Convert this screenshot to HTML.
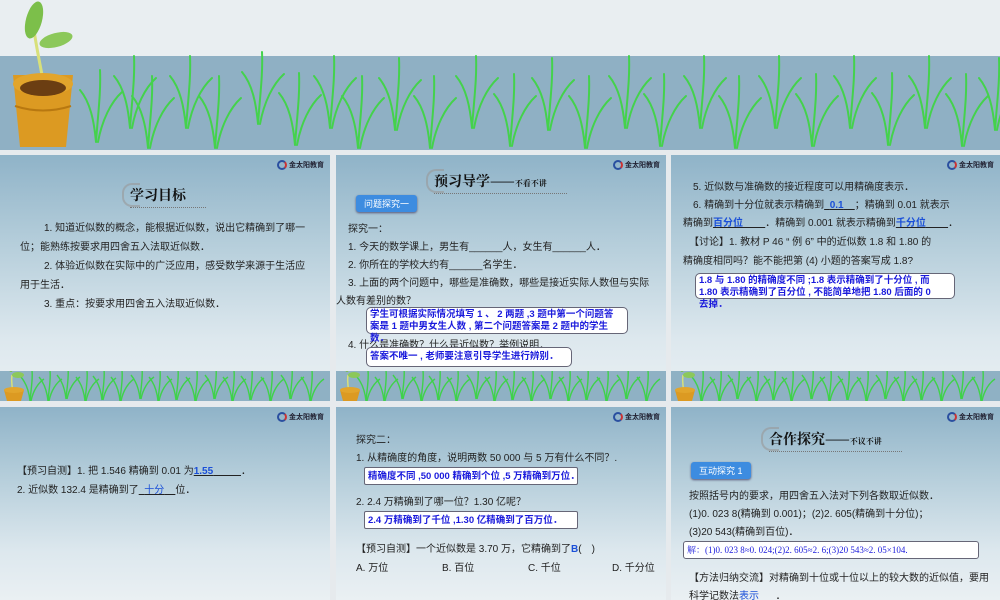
<!DOCTYPE html>
<html><head><meta charset="utf-8"><style>
*{margin:0;padding:0;box-sizing:border-box}
body{width:1000px;height:600px;background:#e6eaed;position:relative;overflow:hidden;font-family:"Liberation Sans","Noto Sans CJK SC",sans-serif;color:#222}
.ab{position:absolute;white-space:nowrap}
.slide{position:absolute;background:linear-gradient(#8fb3c8 0%,#b4cdda 35%,#dde8ee 75%,#eaf0f3 100%);overflow:hidden}
.t{position:absolute;font-size:10px;white-space:nowrap;color:#222}
.logo{position:absolute;right:6px;top:5px;font-size:7px;font-weight:bold;color:#223}
.logo i{display:inline-block;width:10px;height:10px;border-radius:50%;border:2px solid #2a4fa0;border-right-color:#c33;vertical-align:middle;margin-right:2px}
.title{position:absolute;font-family:"Noto Serif CJK SC",serif;font-weight:bold;font-size:14px;color:#111}
.title small{font-size:8px;font-weight:bold}
.title:before{content:"";position:absolute;left:-8px;top:-2px;width:16px;height:20px;border:2px solid #999;border-right:none;border-radius:10px 0 0 10px;opacity:.6}
.title:after{content:"";position:absolute;left:0;right:-20px;bottom:-3px;border-bottom:1px dotted #777}
.btn{position:absolute;background:#3d8ce0;color:#fff;font-size:9px;padding:2px 8px;border-radius:3px;box-shadow:0 1px 2px #557}
.box{position:absolute;background:#fff;border:1px solid #667;border-radius:5px;color:#1a1adc;font-weight:bold;font-size:9.5px;line-height:12px;padding:1px 3px;white-space:nowrap}
.bl{color:#1a4fd8;font-weight:bold}
</style></head><body>
<div class="ab" style="left:0;top:0;width:1000px;height:150px;background:#e9eef1"></div>
<div class="ab" style="left:0;top:56px;width:1000px;height:94px;background:#8fb0c4"></div>
<svg class="ab" style="left:0;top:0" width="1000" height="150">
<defs><g id="g"><path d="M0 0 C-2 -22 -6 -40 -16 -52 M0 0 C2 -28 5 -50 4 -72 M2 0 C6 -22 15 -40 26 -50" stroke="#44d24c" stroke-width="2" fill="none" stroke-linecap="round"/></g></defs>
<use href="#g" x="96" y="142"/><use href="#g" x="130" y="128"/><use href="#g" x="148" y="148"/><use href="#g" x="186" y="128"/><use href="#g" x="215" y="148"/><use href="#g" x="258" y="124"/><use href="#g" x="295" y="145"/><use href="#g" x="330" y="128"/><use href="#g" x="358" y="148"/><use href="#g" x="395" y="130"/><use href="#g" x="430" y="148"/><use href="#g" x="472" y="128"/><use href="#g" x="510" y="146"/><use href="#g" x="548" y="130"/><use href="#g" x="585" y="148"/><use href="#g" x="625" y="128"/><use href="#g" x="660" y="146"/><use href="#g" x="700" y="128"/><use href="#g" x="735" y="148"/><use href="#g" x="775" y="128"/><use href="#g" x="812" y="146"/><use href="#g" x="850" y="128"/><use href="#g" x="888" y="145"/><use href="#g" x="925" y="128"/><use href="#g" x="962" y="146"/><use href="#g" x="995" y="130"/>
<path d="M45 90 C40 65 36 45 34 30" stroke="#d8e07a" stroke-width="3" fill="none"/>
<ellipse cx="34" cy="20" rx="8" ry="19" fill="#7cbf4a" transform="rotate(15 34 20)"/>
<ellipse cx="56" cy="40" rx="17" ry="7" fill="#8cc85a" transform="rotate(-15 56 40)"/>
<path d="M13 75 L73 75 L66 147 L20 147 Z" fill="#dc9a22"/>
<ellipse cx="43" cy="84" rx="30" ry="11" fill="#e2a52c"/>
<ellipse cx="43" cy="88" rx="23" ry="8" fill="#6b3e12"/>
<path d="M15 106 Q43 115 71 106" stroke="#b87810" fill="none" stroke-width="2"/>
</svg>

<svg width="0" height="0" style="position:absolute"><defs>
<g id="s"><path d="M0 0 C-1 -10 -4 -18 -9 -24 M0 0 C1 -12 3 -22 2 -30 M1 0 C3 -10 8 -18 14 -22" stroke="#3fd24a" stroke-width="1.4" fill="none"/></g>
<g id="band"><rect width="330" height="30" fill="#8fb1c4" y="0"/>
<use href="#s" x="30" y="30"/><use href="#s" x="48" y="30"/><use href="#s" x="66" y="28"/><use href="#s" x="85" y="30"/><use href="#s" x="102" y="29"/><use href="#s" x="120" y="30"/><use href="#s" x="140" y="28"/><use href="#s" x="158" y="30"/><use href="#s" x="176" y="29"/><use href="#s" x="195" y="30"/><use href="#s" x="214" y="28"/><use href="#s" x="232" y="30"/><use href="#s" x="250" y="29"/><use href="#s" x="270" y="30"/><use href="#s" x="290" y="28"/><use href="#s" x="310" y="30"/>
<path d="M13 22 C12 15 11 10 12 4" stroke="#d8e07a" stroke-width="1.5" fill="none"/>
<ellipse cx="11" cy="-6" rx="3" ry="7" fill="#7cbf4a"/><ellipse cx="18" cy="4" rx="6" ry="3" fill="#8cc85a"/>
<path d="M4 19 L24 19 L21 30 L7 30 Z" fill="#dc9a22"/><ellipse cx="14" cy="19" rx="10" ry="3" fill="#e2a52c"/>
</g></defs></svg>

<div class="slide" style="left:0;top:155px;width:330px;height:246px">
<div class="logo"><i></i>金太阳教育</div>
<div class="title" style="left:130px;top:30px">学习目标</div>
<div class="t" style="left:44px;top:64px">1. 知道近似数的概念，能根据近似数，说出它精确到了哪一</div>
<div class="t" style="left:20px;top:83px">位；能熟练按要求用四舍五入法取近似数．</div>
<div class="t" style="left:44px;top:102px">2. 体验近似数在实际中的广泛应用，感受数学来源于生活应</div>
<div class="t" style="left:20px;top:121px">用于生活．</div>
<div class="t" style="left:44px;top:140px">3. 重点：按要求用四舍五入法取近似数．</div>
<svg class="ab" style="left:0;top:216px" width="330" height="30"><use href="#band"/></svg>
</div>

<div class="slide" style="left:336px;top:155px;width:330px;height:246px">
<div class="logo"><i></i>金太阳教育</div>
<div class="title" style="left:98px;top:16px">预习导学——<small>不看不讲</small></div>
<div class="btn" style="left:20px;top:40px">问题探究一</div>
<div class="t" style="left:12px;top:65px">探究一：</div>
<div class="t" style="left:12px;top:83px">1. 今天的数学课上，男生有______人，女生有______人．</div>
<div class="t" style="left:12px;top:101px">2. 你所在的学校大约有______名学生．</div>
<div class="t" style="left:12px;top:119px">3. 上面的两个问题中，哪些是准确数，哪些是接近实际人数但与实际</div>
<div class="t" style="left:0;top:137px">人数有差别的数？</div>
<div class="t" style="left:12px;top:181px">4. 什么是准确数？什么是近似数？举例说明．</div>
<div class="box" style="left:30px;top:152px;width:262px;height:27px">学生可根据实际情况填写 1 、 2 两题 ,3 题中第一个问题答<br>案是 1 题中男女生人数 , 第二个问题答案是 2 题中的学生<br>数．</div>
<div class="box" style="left:30px;top:192px;width:206px;height:20px;line-height:16px">答案不唯一 , 老师要注意引导学生进行辨别．</div>
<svg class="ab" style="left:0;top:216px" width="330" height="30"><use href="#band"/></svg>
</div>

<div class="slide" style="left:671px;top:155px;width:329px;height:246px">
<div class="logo"><i></i>金太阳教育</div>
<div class="t" style="left:22px;top:23px">5. 近似数与准确数的接近程度可以用精确度表示．</div>
<div class="t" style="left:22px;top:41px">6. 精确到十分位就表示精确到<u>&nbsp;&nbsp;<span class="bl">0.1</span>&nbsp;&nbsp;&nbsp;&nbsp;</u>；精确到 0.01 就表示</div>
<div class="t" style="left:12px;top:59px">精确到<u><span class="bl">百分位</span>&nbsp;&nbsp;&nbsp;&nbsp;&nbsp;&nbsp;&nbsp;&nbsp;</u>．精确到 0.001 就表示精确到<u><span class="bl">千分位</span>&nbsp;&nbsp;&nbsp;&nbsp;&nbsp;&nbsp;&nbsp;&nbsp;</u>．</div>
<div class="t" style="left:18px;top:78px">【讨论】1. 教材 P 46 “ 例 6” 中的近似数 1.8 和 1.80 的</div>
<div class="t" style="left:12px;top:97px">精确度相同吗？能不能把第 (4) 小题的答案写成 1.8?</div>
<div class="box" style="left:24px;top:118px;width:260px;height:26px">1.8 与 1.80 的精确度不同 ;1.8 表示精确到了十分位 , 而<br>1.80 表示精确到了百分位 , 不能简单地把 1.80 后面的 0<br>去掉．</div>
<svg class="ab" style="left:0;top:216px" width="330" height="30"><use href="#band"/></svg>
</div>

<div class="slide" style="left:0;top:407px;width:330px;height:193px">
<div class="logo"><i></i>金太阳教育</div>
<div class="t" style="left:17px;top:55px">【预习自测】1. 把 1.546 精确到 0.01 为<u><span class="bl">1.55</span>&nbsp;&nbsp;&nbsp;&nbsp;&nbsp;&nbsp;&nbsp;&nbsp;&nbsp;&nbsp;</u>．</div>
<div class="t" style="left:17px;top:74px">2. 近似数 132.4 是精确到了<u>&nbsp;&nbsp;<span class="bl" style="font-weight:normal">十分</span>&nbsp;&nbsp;&nbsp;&nbsp;</u>位．</div>
</div>

<div class="slide" style="left:336px;top:407px;width:330px;height:193px">
<div class="logo"><i></i>金太阳教育</div>
<div class="t" style="left:20px;top:24px">探究二：</div>
<div class="t" style="left:20px;top:42px">1. 从精确度的角度，说明两数 50 000 与 5 万有什么不同？.</div>
<div class="box" style="left:28px;top:60px;width:214px;height:18px;line-height:15px;border-radius:2px">精确度不同 ,50 000 精确到个位 ,5 万精确到万位．</div>
<div class="t" style="left:20px;top:86px">2. 2.4 万精确到了哪一位？1.30 亿呢？</div>
<div class="box" style="left:28px;top:104px;width:214px;height:18px;line-height:15px;border-radius:2px">2.4 万精确到了千位 ,1.30 亿精确到了百万位．</div>
<div class="t" style="left:20px;top:133px">【预习自测】一个近似数是 3.70 万，它精确到了<span class="bl">B</span>(　)</div>
<div class="t" style="left:20px;top:152px">A. 万位</div>
<div class="t" style="left:106px;top:152px">B. 百位</div>
<div class="t" style="left:192px;top:152px">C. 千位</div>
<div class="t" style="left:276px;top:152px">D. 千分位</div>
</div>

<div class="slide" style="left:671px;top:407px;width:329px;height:193px">
<div class="logo"><i></i>金太阳教育</div>
<div class="title" style="left:98px;top:22px">合作探究——<small>不议不讲</small></div>
<div class="btn" style="left:20px;top:55px">互动探究 1</div>
<div class="t" style="left:18px;top:80px">按照括号内的要求，用四舍五入法对下列各数取近似数．</div>
<div class="t" style="left:18px;top:98px">(1)0. 023 8(精确到 0.001)；(2)2. 605(精确到十分位)；</div>
<div class="t" style="left:18px;top:116px">(3)20 543(精确到百位)．</div>
<div class="box" style="left:12px;top:134px;width:296px;height:18px;line-height:15px;font-family:'Liberation Serif','Noto Serif CJK SC',serif;font-weight:normal;font-size:9px;border-radius:3px">解：(1)0. 023 8≈0. 024;(2)2. 605≈2. 6;(3)20 543≈2. 05×104.</div>
<div class="t" style="left:18px;top:162px">【方法归纳交流】对精确到十位或十位以上的较大数的近似值，要用</div>
<div class="t" style="left:18px;top:180px">科学记数法<u><span class="bl" style="font-weight:normal">表示</span>&nbsp;&nbsp;&nbsp;&nbsp;&nbsp;&nbsp;</u>．</div>
</div>
</body></html>
